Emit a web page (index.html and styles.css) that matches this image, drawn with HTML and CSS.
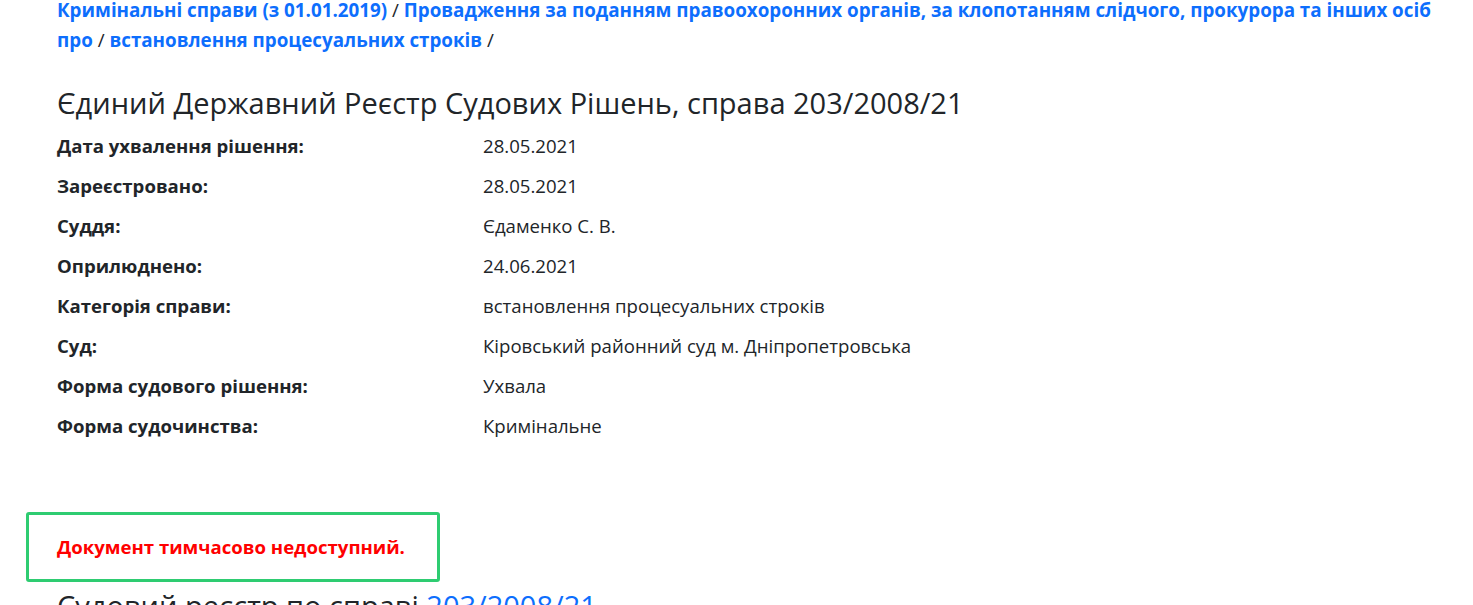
FILE: index.html
```html
<!DOCTYPE html>
<html lang="uk">
<head>
<meta charset="utf-8">
<title>Єдиний Державний Реєстр Судових Рішень</title>
<link rel="stylesheet" href="styles.css">
</head>
<body>
<div class="page">
  <nav class="crumbs">
    <a href="#">Кримінальні справи (з 01.01.2019)</a> / <a href="#">Провадження за поданням правоохоронних органів, за клопотанням слідчого, прокурора та інших осіб про</a> / <a href="#">встановлення процесуальних строків</a> /
  </nav>
  <h3 class="title">Єдиний Державний Реєстр Судових Рішень, справа 203/2008/21</h3>
  <div class="facts">
    <div class="row"><div class="label">Дата ухвалення рішення:</div><div class="value">28.05.2021</div></div>
    <div class="row"><div class="label">Зареєстровано:</div><div class="value">28.05.2021</div></div>
    <div class="row"><div class="label">Суддя:</div><div class="value">Єдаменко С. В.</div></div>
    <div class="row"><div class="label">Оприлюднено:</div><div class="value">24.06.2021</div></div>
    <div class="row"><div class="label">Категорія справи:</div><div class="value">встановлення процесуальних строків</div></div>
    <div class="row"><div class="label">Суд:</div><div class="value">Кіровський районний суд м. Дніпропетровська</div></div>
    <div class="row"><div class="label">Форма судового рішення:</div><div class="value">Ухвала</div></div>
    <div class="row"><div class="label">Форма судочинства:</div><div class="value">Кримінальне</div></div>
  </div>
  <div class="notice">
    <p class="notice-text">Документ тимчасово недоступний.</p>
  </div>
  <h3 class="subtitle">Судовий реєстр по справі <a href="#">203/2008/21</a></h3>
</div>
</body>
</html>
```
FILE: styles.css
```css
html, body {
  margin: 0;
  padding: 0;
  background: #fff;
}
body {
  font-family: "Open Sans", "Noto Sans", sans-serif;
  font-size: 18.6px;
  line-height: 1.5;
  color: #212529;
}
.page {
  padding: 0 20px 0 57px;
}
a {
  color: #0d6efd;
  text-decoration: none;
  font-weight: 700;
}
.crumbs {
  font-size: 18.8px;
  line-height: 30px;
  margin-top: -5px;
  color: #212529;
}
.title {
  font-size: 29px;
  font-weight: 500;
  line-height: 1.2;
  margin: 31px 0 5px;
}
.facts {
  display: flex;
  flex-direction: column;
}
.row {
  display: grid;
  grid-template-columns: 426px 1fr;
  line-height: 28px;
  padding: 6px 0;
}
.label {
  font-weight: 700;
}
.notice {
  margin: 66px 0 0 -31px;
  width: 414px;
  height: 70px;
  box-sizing: border-box;
  border: 3px solid #2ecc71;
  border-radius: 3px;
  display: flex;
  align-items: center;
  padding-left: 28px;
}
.notice-text {
  margin: 0;
  color: #ff0000;
  font-weight: 700;
}
.subtitle {
  font-size: 29px;
  font-weight: 500;
  line-height: 1.2;
  margin: 7px 0 0;
}
.subtitle a {
  font-weight: 500;
}
```
